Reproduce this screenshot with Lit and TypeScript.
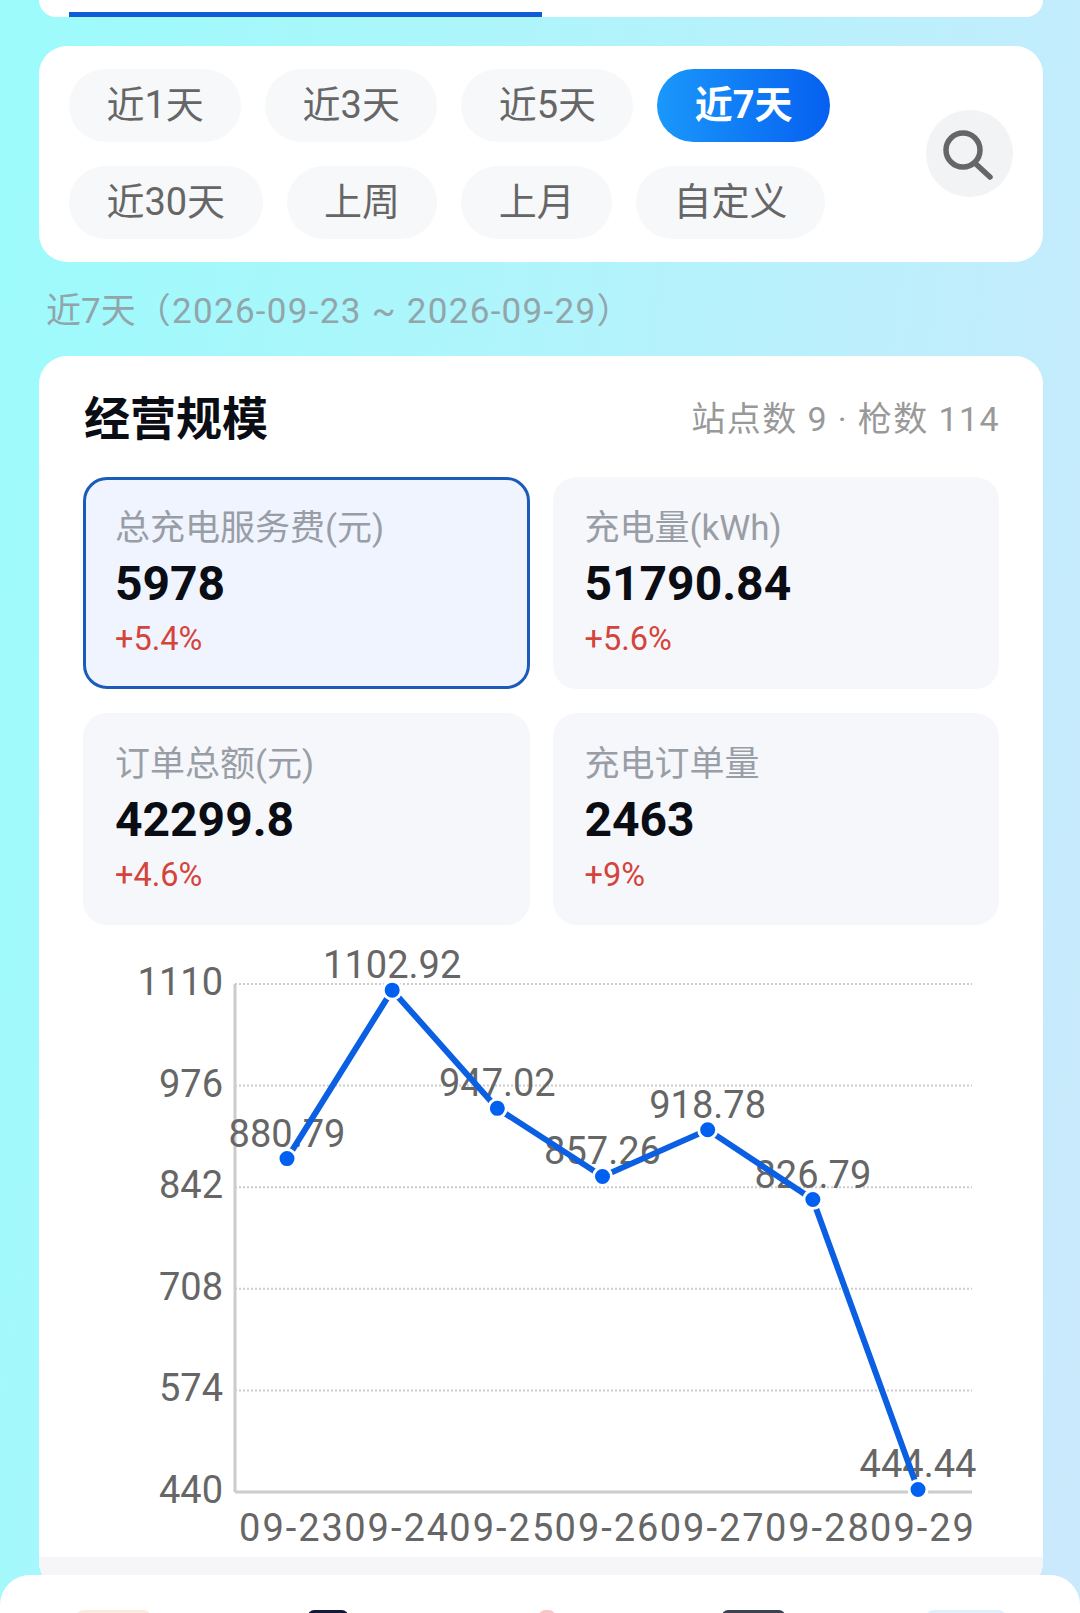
import { LitElement, html, css, svg } from "lit";
import { customElement } from "lit/decorators.js";

const OX = 39;
const OY = 926;
const AXIS_X = 235 - OX;
const GRID_R = 972 - OX;
const TOP = 985 - OY;
const BOTTOM = 1493 - OY;
const toY = (v: number) => BOTTOM - ((v - 440) / 670) * (BOTTOM - TOP) + 0.8;

const TICKS = [1110, 976, 842, 708, 574, 440];
const DATA = [
  { d: "09-23", v: 880.79, t: "880.79" },
  { d: "09-24", v: 1102.92, t: "1102.92" },
  { d: "09-25", v: 947.02, t: "947.02" },
  { d: "09-26", v: 857.26, t: "857.26" },
  { d: "09-27", v: 918.78, t: "918.78" },
  { d: "09-28", v: 826.79, t: "826.79" },
  { d: "09-29", v: 444.44, t: "444.44" },
].map((p, i) => ({ ...p, x: 287 - OX + i * 105.17, y: toY(p.v) }));

const ROW1 = [
  { t: "近1天" },
  { t: "近3天" },
  { t: "近5天" },
  { t: "近7天", on: true },
];
const ROW2 = [{ t: "近30天" }, { t: "上周" }, { t: "上月" }, { t: "自定义" }];

const METRICS = [
  { l: "总充电服务费(元)", v: "5978", p: "+5.4%", on: true },
  { l: "充电量(kWh)", v: "51790.84", p: "+5.6%" },
  { l: "订单总额(元)", v: "42299.8", p: "+4.6%" },
  { l: "充电订单量", v: "2463", p: "+9%" },
];

@customElement("app-root")
export class AppRoot extends LitElement {
  static styles = css`
    :host {
      display: block;
      width: 1080px;
      height: 1613px;
      overflow: hidden;
      font-family: Roboto, "Noto Sans CJK SC", sans-serif;
      background: linear-gradient(98deg, #9cfbfb 0%, #aff5fb 42%, #cbe9fc 100%);
    }
    .top {
      height: 17px;
      margin: 0 37px 0 39px;
      padding-left: 30px;
      background: #fff;
      border-radius: 0 0 24px 24px;
      box-sizing: border-box;
      display: flex;
      align-items: flex-end;
    }
    .tab-line {
      width: 473px;
      height: 5px;
      background: #0f5cd6;
    }
    .filter {
      margin: 29px 37px 0 39px;
      height: 216px;
      box-sizing: border-box;
      padding: 22px 30px;
      background: #fff;
      border-radius: 28px;
      display: flex;
      align-items: center;
      justify-content: space-between;
    }
    .rows {
      display: flex;
      flex-direction: column;
      gap: 24px;
    }
    .row {
      display: flex;
      gap: 24px;
    }
    .chip {
      height: 73px;
      padding: 0 37.4px;
      border-radius: 37px;
      background: #f7f8fa;
      color: #666;
      font-size: 38px;
      line-height: 73px;
      white-space: nowrap;
    }
    .chip.on {
      background: linear-gradient(90deg, #1a98fb, #0660f0);
      color: #fff;
      font-weight: 700;
    }
    .search {
      width: 87px;
      height: 87px;
      margin-top: -2px;
      border-radius: 50%;
      background: #f2f3f5;
      flex: none;
    }
    .search svg {
      display: block;
    }
    .range {
      height: 94px;
      padding-left: 46px;
      padding-bottom: 3px;
      box-sizing: border-box;
      display: flex;
      align-items: center;
      font-size: 35px;
      color: #92a5ab;
      white-space: nowrap;
    }
    .range span {
      letter-spacing: 1.3px;
    }
    .main {
      margin: 0 37px 0 39px;
      height: 1234px;
      background: #fff;
      border-radius: 28px;
      overflow: hidden;
    }
    .head {
      height: 70px;
      margin: 24px 43px 27px 45px;
      display: flex;
      align-items: center;
      justify-content: space-between;
    }
    .title {
      font-size: 46px;
      font-weight: 700;
      color: #0a0d14;
    }
    .sub {
      font-size: 34px;
      color: #999;
      letter-spacing: 1.4px;
      white-space: pre;
      padding-top: 3px;
    }
    .grid {
      display: grid;
      grid-template-columns: 1fr 1fr;
      gap: 24px 23px;
      margin: 0 44px;
    }
    .metric {
      height: 212px;
      box-sizing: border-box;
      padding: 26px 29px 0;
      border: 3px solid transparent;
      border-radius: 24px;
      background: #f6f7fb;
    }
    .metric.on {
      background: #f0f4ff;
      border-color: #1a5cb8;
    }
    .label {
      font-size: 35px;
      line-height: 46px;
      color: #999ea6;
    }
    .value {
      font-size: 48px;
      line-height: 60px;
      margin-top: 2px;
      font-weight: 700;
      color: #0a0d14;
    }
    .pct {
      font-size: 32.5px;
      line-height: 46px;
      margin-top: 2px;
      color: #d4443a;
    }
    .chart {
      display: block;
    }
    .txt {
      font-family: Roboto, sans-serif;
      font-size: 38px;
      fill: #666;
    }
    .date {
      letter-spacing: 2px;
    }
    .strip {
      height: 32px;
      background: #f6f6f8;
    }
    .sheet {
      position: relative;
      margin-top: -15px;
      height: 60px;
      background: #fff;
      border-radius: 30px 30px 0 0;
      display: flex;
      padding-top: 35px;
      box-sizing: border-box;
    }
    .ic {
      height: 10px;
      border-radius: 6px 6px 0 0;
      flex: none;
    }
    .i1 {
      width: 73px;
      margin-left: 77px;
      background: #fdebe0;
    }
    .i2 {
      width: 40px;
      margin-left: 158px;
      background: #101a3c;
    }
    .i3 {
      width: 16px;
      margin-left: 191px;
      background: #fdc4c4;
    }
    .i4 {
      width: 63px;
      margin-left: 167px;
      background: #3c4154;
    }
    .i5 {
      width: 78px;
      margin-left: 142px;
      background: #e0f1fd;
    }
  `;

  private chip(c: { t: string; on?: boolean }) {
    return html`<div class="chip ${c.on ? "on" : ""}">${c.t}</div>`;
  }

  private chart() {
    const line = DATA.map((p) => `${p.x},${p.y}`).join(" ");
    return html`<svg class="chart" width="1004" height="632" viewBox="0 0 1004 632">
      ${TICKS.map((t, i) => {
        const y = TOP + (i * (BOTTOM - TOP)) / 5;
        return svg`
          <text class="txt" x="${223 - OX}" y="${y + 11}" text-anchor="end">${t}</text>
          ${i < 5
            ? svg`<line x1="${AXIS_X}" x2="${GRID_R}" y1="${y}" y2="${y}" stroke="#ccc" stroke-width="2" stroke-dasharray="2 2"></line>`
            : ""}
        `;
      })}
      <line x1="${AXIS_X}" x2="${AXIS_X}" y1="${TOP}" y2="${BOTTOM}" stroke="#ccc" stroke-width="3"></line>
      <line x1="${AXIS_X}" x2="${GRID_R}" y1="${BOTTOM}" y2="${BOTTOM}" stroke="#ccc" stroke-width="3"></line>
      ${DATA.map(
        (p) => svg`
          <text class="txt" x="${p.x}" y="${p.y - 12}" text-anchor="middle">${p.t}</text>
          <text class="txt date" x="${p.x + 5}" y="${1542 - OY}" text-anchor="middle">${p.d}</text>
        `
      )}
      <polyline points="${line}" fill="none" stroke="#0b5fe3" stroke-width="6"></polyline>
      ${DATA.map(
        (p) => svg`<circle cx="${p.x}" cy="${p.y}" r="9" fill="#0060f0" stroke="#fff" stroke-width="3"></circle>`
      )}
    </svg>`;
  }

  render() {
    return html`
      <div class="top"><div class="tab-line"></div></div>
      <div class="filter">
        <div class="rows">
          <div class="row">${ROW1.map((c) => this.chip(c))}</div>
          <div class="row">${ROW2.map((c) => this.chip(c))}</div>
        </div>
        <div class="search">
          <svg width="87" height="87" viewBox="0 0 87 87" fill="none" stroke="#666" stroke-width="5.5" stroke-linecap="round">
            <circle cx="37" cy="40" r="17"></circle>
            <path d="M51 55 L64 67"></path>
          </svg>
        </div>
      </div>
      <div class="range">近7天<span>（2026-09-23 ~ 2026-09-29）</span></div>
      <div class="main">
        <div class="head">
          <div class="title">经营规模</div>
          <div class="sub">站点数 9 · 枪数 114</div>
        </div>
        <div class="grid">
          ${METRICS.map(
            (m) => html`<div class="metric ${m.on ? "on" : ""}">
              <div class="label">${m.l}</div>
              <div class="value">${m.v}</div>
              <div class="pct">${m.p}</div>
            </div>`
          )}
        </div>
        ${this.chart()}
        <div class="strip"></div>
      </div>
      <div class="sheet">
        <div class="ic i1"></div>
        <div class="ic i2"></div>
        <div class="ic i3"></div>
        <div class="ic i4"></div>
        <div class="ic i5"></div>
      </div>
    `;
  }
}
